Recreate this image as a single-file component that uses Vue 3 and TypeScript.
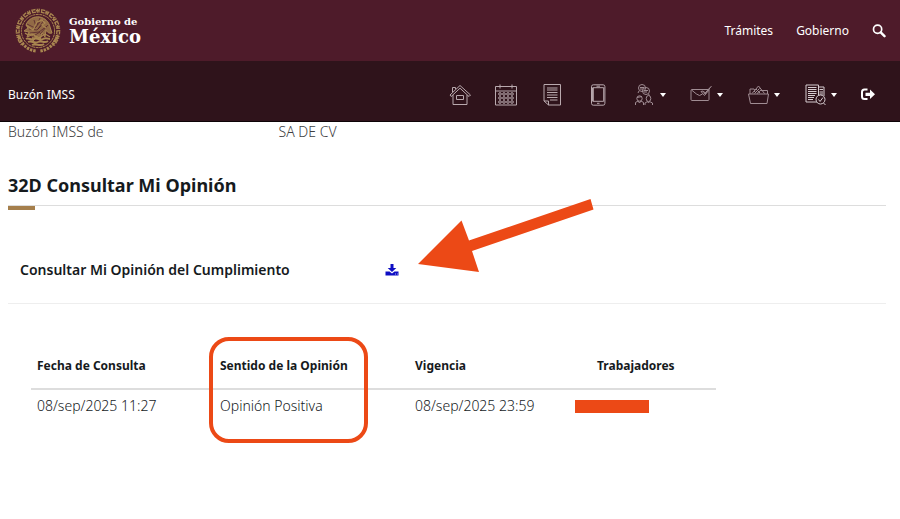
<script setup lang="ts">
interface Consulta {
  fecha: string
  sentido: string
  vigencia: string
}

interface Ring {
  x: number
  y: number
  angle: number
}

const consultas: Consulta[] = [
  { fecha: '08/sep/2025 11:27', sentido: 'Opinión Positiva', vigencia: '08/sep/2025 23:59' },
]

// Marks of the lettering band around the seal
const marks: Ring[] = Array.from({ length: 30 }, (_, i) => {
  const angle = -215 + i * 8.8
  const rad = (angle * Math.PI) / 180
  return { x: 23 + 20.3 * Math.cos(rad), y: 23 + 20.3 * Math.sin(rad), angle }
})

const calendarDots: number[] = [5, 9, 13, 17]
const calendarRows: number[] = [10, 14, 18]
</script>

<template>
  <div class="page">
    <header class="gov">
      <a class="brand" href="#" aria-label="Gobierno de México">
        <svg class="seal" viewBox="0 0 46 46" fill="none" stroke="#a98650" aria-hidden="true">
          <g stroke-width="2">
            <path
              v-for="(m, i) in marks"
              :key="i"
              :d="i % 3 === 0 ? 'M-1.4-2v4M1.2-2v4' : i % 3 === 1 ? 'M-1.5-1.3H1.5M-1.5 1.4H1.5' : 'M0-2v4M-1.4 0H1.6'"
              :transform="`translate(${m.x} ${m.y}) rotate(${m.angle + 90})`"
              stroke-width="1.3"
            />
          </g>
          <path d="M4 29c3 8 9 13 17 14M42 29c-3 8-9 13-17 14" stroke-width="3" stroke-dasharray="2.4 1" />
          <circle cx="23" cy="23" r="16.6" stroke-width="1" stroke-dasharray="3 .6" />
          <path d="M11 17c2-6 8-9 14-8 5 1 9 5 10 10l2 6c-3 1-5-1-6-3l-1 7-3-4-2 7-3-4-4 5-1-6-5 2 2-5-5-1 4-3z" fill="#a98650" fill-opacity=".75" stroke-width="1" />
          <path d="M12 16l8 4 5-6M14 21l8 1 8-8M15 25l9-1 8-6M25 10l-3 7M29 12l-6 9M33 17l-8 9M19 12l2 7M17 29l8-5" stroke="#4e1b2a" stroke-width=".7" />
          <path d="M11 17l7 5 4-8 5-2 3 3-3 2 4 3M10 25c4 4 6-1 9 2s4 4 8 1 5-1 8 1" stroke-width="1.2" />
          <path d="M11 31c3-2 5 2 8 0s6 2 9 0 5 0 7 0M13 34c4-2 6 2 10 0s6 2 10-1M17 37c4-2 8 2 12-1" stroke-width="1.9" />
        </svg>
        <span class="wordmark">
          <span class="wordmark-top">Gobierno de</span>
          <span class="wordmark-main">México</span>
        </span>
      </a>
      <nav class="gov-links" aria-label="Gobierno">
        <a href="#">Trámites</a>
        <a href="#">Gobierno</a>
        <button class="plain" type="button" aria-label="Buscar">
          <svg class="search" viewBox="0 0 14 14" fill="none" stroke="currentColor" aria-hidden="true">
            <circle cx="5.6" cy="5.3" r="4.1" stroke-width="1.7" />
            <path d="M8.7 8.4l3.8 3.8" stroke-width="2.4" stroke-linecap="round" />
          </svg>
        </button>
      </nav>
    </header>

    <div class="subnav">
      <a class="subnav-title" href="#">Buzón IMSS</a>
      <nav class="tools" aria-label="Buzón IMSS">
        <button class="plain" type="button" aria-label="Inicio">
          <svg class="tool" viewBox="0 0 22 22" aria-hidden="true">
            <path d="M1 11L11 1.5 21.5 11l-1.5 1.5L11 4.2 2.2 12.500zM4 11v9.500h14V11M3.500 8V3.500h3V5M7.500 11.500h7v4h-7z" />
          </svg>
        </button>
        <button class="plain" type="button" aria-label="Calendario">
          <svg class="tool" viewBox="0 0 22 22" aria-hidden="true">
            <path d="M.5 2.5h21v18.500H.5zM.5 7h21M5 .5v4M17 .5v4" />
            <g v-for="y in calendarRows" :key="y">
              <circle v-for="x in calendarDots" :key="x" :cx="x" :cy="y" r="1.3" />
            </g>
          </svg>
        </button>
        <button class="plain" type="button" aria-label="Documentos">
          <svg class="tool" viewBox="0 0 22 22" aria-hidden="true">
            <path d="M3 .5h16.500v20.500H7.500L3 17zM3 17h4.500v4M6 4h10.500M6 6h10.500M6 8.500h10.500M6 11h10.500M6 13.500h10.500M9 16h7.500" />
          </svg>
        </button>
        <button class="plain" type="button" aria-label="Móvil">
          <svg class="tool" viewBox="0 0 22 22" aria-hidden="true">
            <rect x="4.5" y=".8" width="13.4" height="20.4" rx="1.8" />
            <path d="M5.700 3.700h11v13.600h-11zM9.500 2.200h3.500M10 19.300h2.500" />
            <path d="M6 4v13" stroke-width="1.5" />
          </svg>
        </button>
        <button class="plain menu" type="button" aria-label="Atención">
          <svg class="tool faint" viewBox="0 0 22 22" aria-hidden="true">
            <circle cx="9" cy="4" r="3.5" /><circle cx="13" cy="7" r="3.5" />
            <path d="M7 3.500h4M7 5h3M11 6.500h4M11 8h3M6 7L5 9M15.500 10l1 1.500" />
            <circle cx="6.5" cy="14.5" r="2.7" /><ellipse cx="15.5" cy="14.5" rx="2.3" ry="3" />
            <path d="M4 13.500l5-1M2.500 21v-2.500l2.500-1.500 1.500 2 1.500-2 2.500 1.500V21M12 21v-2l2.500-1.500 1 1.500 1-1.500 3 1.500v2" />
          </svg>
          <span class="caret"></span>
        </button>
        <button class="plain menu" type="button" aria-label="Mensajes">
          <svg class="tool faint" viewBox="0 0 22 22" aria-hidden="true">
            <rect x="1" y="5.5" width="18" height="11" rx="1" />
            <path d="M1.500 6l5 4 3 1.500 3-1.500M13 7l2 3L21.500 2M14 7.500l1.200 1.500L20 3.500M13 7l-2 .5 3.500 4 5-6" />
          </svg>
          <span class="caret"></span>
        </button>
        <button class="plain menu" type="button" aria-label="Expediente">
          <svg class="tool faint" viewBox="0 0 22 22" aria-hidden="true">
            <path d="M3.500 19.500L1.500 10h20l-1.500 9.500zM3 10V5h4l1 1.500M14 6.500h6.500V10M5 9.500L11.500 2l6 7.500M7.500 9.500l5-5M10 9.500l4-3.500M7 7l2 2M9 5l4 4" />
          </svg>
          <span class="caret"></span>
        </button>
        <button class="plain menu" type="button" aria-label="Consultas">
          <svg class="tool strong" viewBox="0 0 22 22" aria-hidden="true">
            <path d="M2 1h12.500v17H2zM14.500 3H20v9M4 3.500h8.500M4 5.500h8.500M4 7.500h8.500M4 9.500h8.500M4 11.500h7M4 13.500h6M4 15.500h5M15.500 5.500H19M15.500 8H19M15.500 10H19" />
            <circle cx="16.5" cy="15.5" r="4.5" class="lens" />
            <path d="M14.500 15.500l1.500 2 3-4M19.500 19l2 2" />
          </svg>
          <span class="caret"></span>
        </button>
        <button class="plain" type="button" aria-label="Salir">
          <svg class="exit" viewBox="0 0 14 14" aria-hidden="true">
            <path d="M6.500 1.500H3.500Q1 1.500 1 4v4.500Q1 11 3.500 11H6.500" fill="none" stroke="#fff" stroke-width="2" />
            <path d="M4.500 4.700h4.500V1.500L14 6.300 9 11V7.900H4.500z" fill="#fff" />
          </svg>
        </button>
      </nav>
    </div>

    <main class="content">
      <p class="owner"><span>Buzón IMSS de</span><span>SA DE CV</span></p>

      <h1>32D Consultar Mi Opinión</h1>

      <section class="download">
        <h2>Consultar Mi Opinión del Cumplimiento</h2>
        <a class="download-link" href="#" aria-label="Descargar opinión">
          <svg viewBox="0 0 14 14" aria-hidden="true">
            <path d="M5.500 1h3v4h2.800L7 9 2.700 5h2.800z" />
            <path d="M.5 8.500h4L7 10.500l2.500-2h4v4H.5z" />
            <path d="M10 11h1M12 11h.8" stroke="#fff" stroke-width=".7" />
          </svg>
        </a>
        <svg class="arrow" viewBox="0 0 176 74" aria-hidden="true">
          <path d="M0 65L43.500 21.500 51 41.500 172.500 0 175.500 10.500 54 52 61 73z" />
        </svg>
      </section>

      <table>
        <thead>
          <tr>
            <th scope="col">Fecha de Consulta</th>
            <th scope="col" class="marked">Sentido de la Opinión</th>
            <th scope="col">Vigencia</th>
            <th scope="col" class="workers">Trabajadores</th>
          </tr>
        </thead>
        <tbody>
          <tr v-for="c in consultas" :key="c.fecha">
            <td>{{ c.fecha }}</td>
            <td>{{ c.sentido }}</td>
            <td>{{ c.vigencia }}</td>
            <td class="hidden-value"><span class="redacted"></span></td>
          </tr>
        </tbody>
      </table>
    </main>
  </div>
</template>

<style>
body {
  background: #fff;
}
</style>

<style scoped>
.page {
  font-family: "Noto Sans", "Open Sans", sans-serif;
  font-size: 14px;
  line-height: 20px;
  color: #161a1d;
}

a {
  color: inherit;
  text-decoration: none;
}

.plain {
  display: flex;
  align-items: center;
  padding: 0;
  border: 0;
  background: none;
  color: inherit;
  cursor: pointer;
}

.gov {
  display: flex;
  align-items: center;
  justify-content: space-between;
  height: 61px;
  padding: 0 14px 0 15px;
  background: #4e1b2a;
  color: #fff;
}

.brand {
  display: flex;
  align-items: center;
  gap: 8px;
}

.seal {
  width: 46px;
  height: 46px;
}

.wordmark {
  display: flex;
  flex-direction: column;
  font-family: "DejaVu Serif", serif;
  font-weight: 700;
}

.wordmark-top {
  font-size: 10px;
  line-height: 12px;
}

.wordmark-main {
  font-size: 18px;
  line-height: 18px;
}

.gov-links {
  display: flex;
  align-items: center;
  gap: 23px;
  font-size: 12px;
}

.search {
  width: 14px;
  height: 14px;
}

.subnav {
  display: flex;
  align-items: center;
  justify-content: space-between;
  height: 61px;
  padding: 8px 25px 0 8px;
  box-sizing: border-box;
  background: #2f131b;
  border-bottom: 1px solid #0d0306;
  color: #fff;
}

.subnav-title {
  font-size: 12px;
}

.tools {
  display: flex;
  align-items: center;
  gap: 24px;
}

.tool {
  width: 22px;
  height: 22px;
  fill: none;
  stroke: #b9a9ae;
  stroke-width: 1;
}

.faint {
  stroke: #a08c93;
}

.strong {
  stroke: #d6ccd0;
}

.lens {
  fill: #2f131b;
}

.menu {
  gap: 5px;
}

.caret {
  border: 3px solid transparent;
  border-top: 4px solid #fff;
  border-bottom: 0;
}

.exit {
  width: 14px;
  height: 14px;
}

.content {
  padding: 0 14px 40px 8px;
}

.owner {
  display: flex;
  gap: 175px;
  margin: 0;
  color: #404041;
  font-weight: 300;
}

h1 {
  position: relative;
  margin: 28px 0 0;
  padding-bottom: 5px;
  border-bottom: 1px solid #ddd;
  font-size: 18px;
  line-height: 30px;
  font-weight: 700;
}

h1::after {
  content: "";
  position: absolute;
  left: 0;
  top: 36px;
  width: 27px;
  height: 4px;
  background: #a57f4c;
}

.download {
  position: relative;
  display: flex;
  align-items: center;
  gap: 95px;
  padding: 54px 12px 23px;
  border-bottom: 1px solid #eee;
}

h2 {
  margin: 0;
  font-size: 14px;
  line-height: 20px;
  font-weight: 600;
}

.download-link svg {
  display: block;
  width: 14px;
  height: 14px;
  fill: #0e0ec4;
}

.arrow {
  position: absolute;
  left: 410px;
  top: -7px;
  width: 176px;
  height: 74px;
  fill: #ec4916;
}

table {
  width: 78%;
  margin: 40px 0 0 23px;
  border-collapse: collapse;
  table-layout: fixed;
  text-align: left;
}

th {
  position: relative;
  height: 44px;
  padding: 0 6px;
  border-bottom: 2px solid #ddd;
  font-size: 12px;
  font-weight: 700;
}

th:nth-child(1) {
  width: 171px;
}

th:nth-child(2) {
  width: 183px;
}

th:nth-child(3) {
  width: 148px;
}

td {
  height: 32px;
  padding: 0 6px;
  font-weight: 300;
}

th.workers {
  padding-left: 28px;
}

td.hidden-value {
  padding-left: 6px;
}

.marked::after {
  content: "";
  position: absolute;
  left: -5px;
  top: -7px;
  width: 151px;
  height: 98px;
  border: 4px solid #ec4916;
  border-radius: 20px;
}

.redacted {
  display: block;
  width: 74px;
  height: 13px;
  background: #ec4916;
}
</style>
